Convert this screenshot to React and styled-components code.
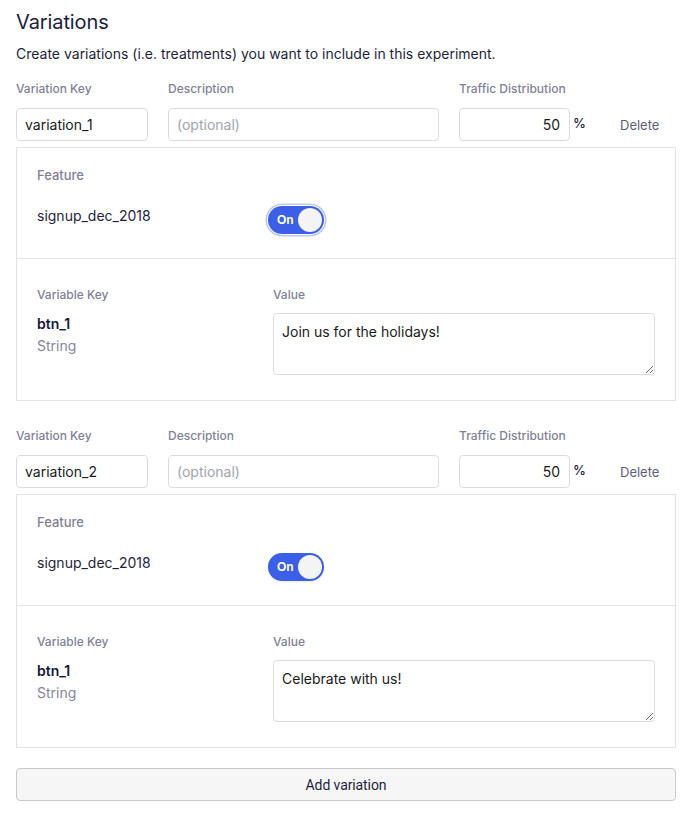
import React from "react";
import styled, { createGlobalStyle, css } from "styled-components";

const Global = createGlobalStyle`
  * { box-sizing: border-box; }
  body {
    margin: 0;
    background: #ffffff;
    font-family: Inter, "Noto Sans", "Liberation Sans", sans-serif;
    color: #1e1e3c;
  }
`;

const Page = styled.div`
  padding: 9px 20px 20px 16px;
  display: flex;
  flex-direction: column;
`;

const Title = styled.h2`
  margin: 0;
  font-size: 20px;
  line-height: 26px;
  font-weight: 400;
  color: #1b1b3d;
  letter-spacing: -0.1px;
`;

const Subtitle = styled.p`
  margin: 9px 0 0;
  font-size: 14px;
  line-height: 20px;
  color: #1e1e3c;
`;

const VariationBlock = styled.section`
  display: flex;
  flex-direction: column;
  margin-top: ${(p) => (p.$first ? "17px" : "27px")};
`;

const HeaderRow = styled.div`
  display: flex;
  align-items: flex-end;
`;

const Field = styled.div`
  display: flex;
  flex-direction: column;
  width: ${(p) => p.$w}px;
  margin-right: ${(p) => p.$mr || 0}px;
`;

const Label = styled.label`
  font-size: 12px;
  line-height: 16px;
  font-weight: 500;
  color: #7f7f98;
  margin-bottom: ${(p) => p.$mb ?? 11}px;
`;

const TextInput = styled.input`
  width: 100%;
  height: 33px;
  border: 1px solid #dcdce0;
  border-radius: 4px;
  padding: 0 8px;
  font-family: inherit;
  font-size: 14px;
  color: #1a1a1a;
  background: #fff;
  outline: none;
  text-align: ${(p) => (p.$right ? "right" : "left")};
  ${(p) => p.$right && css`padding-right: 9px;`}
  &::placeholder { color: #a3a3ad; }
`;

const Percent = styled.span`
  font-size: 13px;
  font-weight: 500;
  color: #1e1e3c;
  height: 33px;
  line-height: 30px;
  margin-left: 3px;
  width: 47px;
`;

const DeleteLink = styled.button`
  border: none;
  background: none;
  padding: 0;
  height: 33px;
  font-family: inherit;
  font-size: 13px;
  color: #5d5d7a;
  cursor: pointer;
  line-height: 35px;
`;

const Panel = styled.div`
  margin-top: 6px;
  border: 1px solid #e2e2e4;
  display: flex;
  flex-direction: column;
`;

const Section = styled.div`
  padding: ${(p) => p.$pad};
  & + & { border-top: 1px solid #e2e2e4; }
`;

const SectionLabel = styled.div`
  font-size: 13px;
  line-height: 16px;
  font-weight: 500;
  color: #7f7f98;
`;

const FeatureRow = styled.div`
  display: grid;
  grid-template-columns: 231px auto;
  align-items: start;
  margin-top: 22px;
`;

const FeatureName = styled.div`
  font-size: 14px;
  line-height: 20px;
  color: #1e1e3c;
  margin-top: 1px;
`;

const ToggleWrap = styled.button`
  position: relative;
  width: 56px;
  height: 28px;
  margin-top: 1px;
  border-radius: 14px;
  border: none;
  padding: 0;
  background: #3b5fe6;
  cursor: pointer;
  justify-self: start;
  box-shadow: ${(p) =>
    p.$focus ? "0 0 0 1px #fff, 0 0 0 2.5px #b9c6f6" : "0 1px 2px rgba(0,0,0,0.08)"};
`;

const ToggleText = styled.span`
  position: absolute;
  left: 9px;
  top: 0;
  line-height: 28px;
  font-size: 12px;
  font-weight: 700;
  color: #fff;
`;

const Knob = styled.span`
  position: absolute;
  right: 2px;
  top: 2px;
  width: 24px;
  height: 24px;
  border-radius: 50%;
  background: #f4f4f5;
`;

const VarGrid = styled.div`
  display: grid;
  grid-template-columns: 236px 1fr;
`;

const VarCol = styled.div`
  display: flex;
  flex-direction: column;
`;

const VarKey = styled.div`
  margin-top: 11px;
  font-size: 14px;
  line-height: 20px;
  font-weight: 600;
  color: #16163a;
`;

const VarType = styled.div`
  margin-top: 2px;
  font-size: 14px;
  line-height: 20px;
  color: #85859a;
`;

const ValueArea = styled.textarea`
  width: 100%;
  height: 62px;
  border: 1px solid #dcdce0;
  border-radius: 4px;
  padding: 8px 8px;
  font-family: inherit;
  font-size: 14px;
  line-height: 20px;
  color: #1a1a1a;
  resize: vertical;
  outline: none;
`;

const AddButton = styled.button`
  margin-top: 20px;
  width: 100%;
  height: 33px;
  border: 1px solid #c9c9cc;
  border-radius: 4px;
  background: #f6f6f6;
  font-family: "Roboto", "Liberation Sans", sans-serif;
  font-size: 14px;
  color: #1e1e3c;
  cursor: pointer;
  letter-spacing: -0.1px;
`;

function Toggle({ focus }) {
  return (
    <ToggleWrap $focus={focus} aria-pressed="true">
      <ToggleText>On</ToggleText>
      <Knob />
    </ToggleWrap>
  );
}

function Variation({ first, keyName, value, focus }) {
  return (
    <VariationBlock $first={first}>
      <HeaderRow>
        <Field $w={132} $mr={20}>
          <Label>Variation Key</Label>
          <TextInput defaultValue={keyName} />
        </Field>
        <Field $w={271} $mr={20}>
          <Label>Description</Label>
          <TextInput placeholder="(optional)" />
        </Field>
        <Field $w={111}>
          <Label>Traffic Distribution</Label>
          <TextInput $right defaultValue="50" />
        </Field>
        <Percent>%</Percent>
        <DeleteLink>Delete</DeleteLink>
      </HeaderRow>
      <Panel>
        <Section $pad="19px 20px 24px">
          <SectionLabel>Feature</SectionLabel>
          <FeatureRow>
            <FeatureName>signup_dec_2018</FeatureName>
            <Toggle focus={focus} />
          </FeatureRow>
        </Section>
        <Section $pad="28px 20px 25px">
          <VarGrid>
            <VarCol>
              <Label as="div" $mb={0}>Variable Key</Label>
              <VarKey>btn_1</VarKey>
              <VarType>String</VarType>
            </VarCol>
            <VarCol>
              <Label as="div" $mb={10}>Value</Label>
              <ValueArea defaultValue={value} />
            </VarCol>
          </VarGrid>
        </Section>
      </Panel>
    </VariationBlock>
  );
}

export default function App() {
  return (
    <>
      <Global />
      <Page>
        <Title>Variations</Title>
        <Subtitle>Create variations (i.e. treatments) you want to include in this experiment.</Subtitle>
        <Variation first keyName="variation_1" value="Join us for the holidays!" focus />
        <Variation keyName="variation_2" value="Celebrate with us!" />
        <AddButton>Add variation</AddButton>
      </Page>
    </>
  );
}
